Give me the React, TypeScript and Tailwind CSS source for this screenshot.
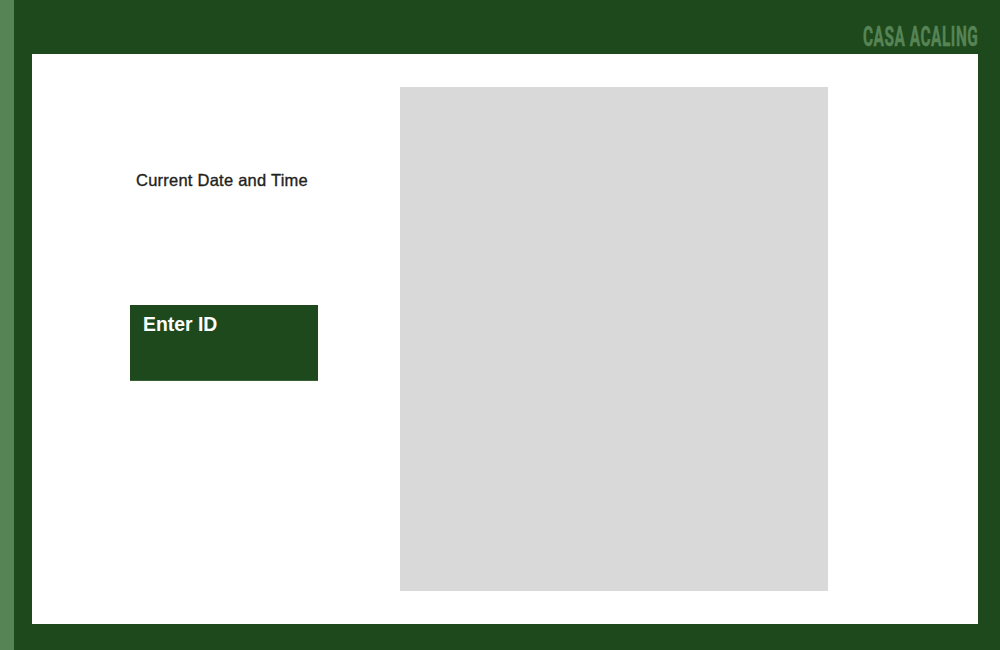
export default function App() {
  return (
    <div className="flex h-[650px] w-[1000px] overflow-hidden bg-[#1e491c] font-['Liberation_Sans',Arial,sans-serif]">
      <div className="w-3.5 shrink-0 bg-[#578455]" />
      <div className="flex flex-1 flex-col pr-[22px] pb-[26px] pl-[18px]">
        <header className="flex h-[54px] shrink-0 justify-end pt-[19px]">
          <h1 className="h-9 w-[115px] origin-top-left scale-x-[0.57] font-[Roboto,'Liberation_Sans',sans-serif] text-[27px] leading-9 font-bold tracking-[0.95px] whitespace-nowrap text-[#578455] [-webkit-text-stroke:0.5px_#578455]">
            CASA ACALING
          </h1>
        </header>
        <main className="flex flex-1 bg-white pt-[33px] pl-[98px]">
          <section className="flex w-[270px] flex-col">
            <p className="mt-[81px] ml-1.5 h-6 text-[16.5px] leading-6 tracking-[0.24px] whitespace-nowrap text-[#231f20] [-webkit-text-stroke:0.35px_#231f20]">
              Current Date and Time
            </p>
            <div className="mt-[113px] h-[76px] w-[188px] border-b border-[#376035] bg-[#1e491c] pt-[7px] pl-[13px]">
              <label className="block text-[19.4px] leading-6 font-bold text-white">Enter ID</label>
            </div>
          </section>
          <section className="h-[504px] w-[428px] bg-[#d9d9d9]" />
        </main>
      </div>
    </div>
  );
}
